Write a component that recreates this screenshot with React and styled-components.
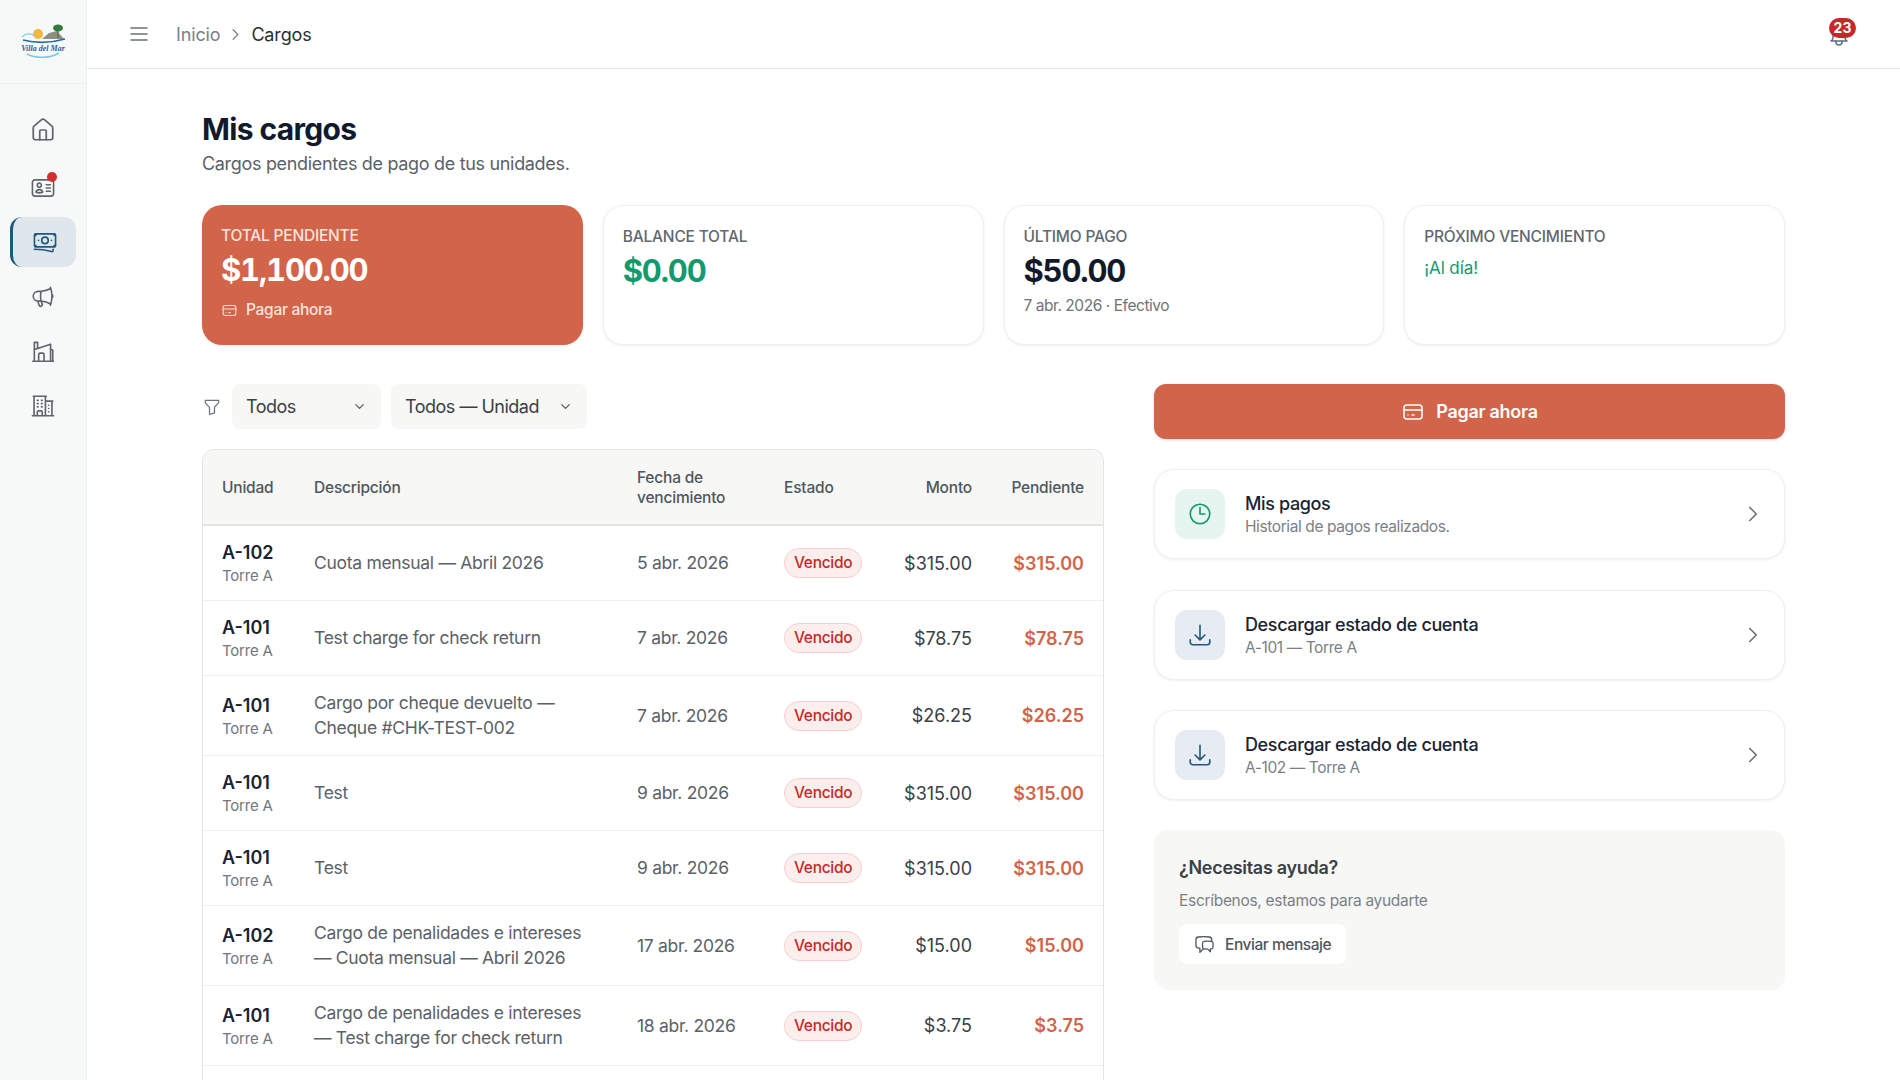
import React from "react";
import styled, { createGlobalStyle } from "styled-components";
import { TbMenu2, TbChevronRight, TbChevronDown, TbFilter, TbCreditCard, TbBell } from "react-icons/tb";
import {
  HiOutlineIdentification,
  HiOutlineBanknotes,
  HiOutlineMegaphone,
  HiOutlineBuildingOffice2,
  HiOutlineClock,
  HiOutlineArrowDownTray,
  HiOutlineChatBubbleLeftRight,
} from "react-icons/hi2";
import { House } from "lucide-react";

const GlobalStyle = createGlobalStyle`
  * { box-sizing: border-box; }
  html, body { margin: 0; height: 100%; }
  body {
    overflow: hidden;
    background: #fff;
    color: #111827;
    font-family: "Inter", "Liberation Sans", sans-serif;
  }
`;

const charges = [
  { unit: "A-102", desc: ["Cuota mensual — Abril 2026"], date: "5 abr. 2026", amount: "$315.00", h: 75 },
  { unit: "A-101", desc: ["Test charge for check return"], date: "7 abr. 2026", amount: "$78.75", h: 75 },
  { unit: "A-101", desc: ["Cargo por cheque devuelto —", "Cheque #CHK-TEST-002"], date: "7 abr. 2026", amount: "$26.25", h: 80 },
  { unit: "A-101", desc: ["Test"], date: "9 abr. 2026", amount: "$315.00", h: 75 },
  { unit: "A-101", desc: ["Test"], date: "9 abr. 2026", amount: "$315.00", h: 75 },
  { unit: "A-102", desc: ["Cargo de penalidades e intereses", "— Cuota mensual — Abril 2026"], date: "17 abr. 2026", amount: "$15.00", h: 80 },
  { unit: "A-101", desc: ["Cargo de penalidades e intereses", "— Test charge for check return"], date: "18 abr. 2026", amount: "$3.75", h: 80 },
];

const Shell = styled.div`
  display: flex;
  height: 100vh;
  overflow: hidden;
`;

const Sidebar = styled.aside`
  width: 87px;
  flex: none;
  background: #f7f8f8;
  border-right: 1px solid #eeefef;
`;

const LogoBox = styled.div`
  height: 84px;
  display: flex;
  align-items: center;
  justify-content: center;
  border-bottom: 1px solid #eeefef;
`;

const NavList = styled.nav`
  display: flex;
  flex-direction: column;
  align-items: center;
  padding-top: 21px;
  gap: 4.5px;
`;

const NavItem = styled.div`
  position: relative;
  width: 66px;
  height: 50px;
  margin-top: ${(p) => p.$top || 0}px;
  display: flex;
  align-items: center;
  justify-content: center;
  border-radius: 12px;
  color: ${(p) => (p.$active ? "#1e5a7e" : "#5f656c")};
  background: ${(p) => (p.$active ? "#dfe7ed" : "transparent")};
  border-left: ${(p) => (p.$active ? "3px solid #1e5a7e" : "0")};
  svg { width: 26px; height: 26px; }
`;

const NavDot = styled.span`
  position: absolute;
  top: 9px;
  right: 19px;
  width: 10px;
  height: 10px;
  border-radius: 50%;
  background: #d32f2f;
`;

const Main = styled.div`
  flex: 1;
  min-width: 0;
`;

const Topbar = styled.header`
  height: 69px;
  display: flex;
  align-items: center;
  padding: 0 49px 0 40px;
  border-bottom: 1px solid #e9eaeb;
`;

const MenuButton = styled.span`
  display: flex;
  color: #6b7177;
  font-size: 24px;
  margin-right: 25px;
`;

const Crumbs = styled.div`
  display: flex;
  align-items: center;
  gap: 6px;
  font-size: 18px;
  letter-spacing: -0.15px;
  color: #7b8087;
  svg { font-size: 19px; }
`;

const CrumbCurrent = styled.span`
  color: #2a2f36;
`;

const BellWrap = styled.div`
  position: relative;
  margin: 3px 0 0 auto;
  display: flex;
  color: #5c6f85;
  font-size: 24px;
`;

const BellBadge = styled.span`
  position: absolute;
  top: -6px;
  right: -5px;
  min-width: 27px;
  height: 20px;
  border-radius: 10px;
  background: #c62828;
  color: #fff;
  font-size: 14px;
  font-weight: 700;
  display: flex;
  align-items: center;
  justify-content: center;
`;

const Content = styled.main`
  padding: 40px 115px 0;
`;

const Title = styled.h1`
  margin: 0;
  font-size: 30px;
  line-height: 40px;
  font-weight: 700;
  letter-spacing: -0.65px;
  color: #111a2b;
`;

const Subtitle = styled.p`
  margin: 3px 0 0;
  font-size: 18px;
  line-height: 24px;
  letter-spacing: -0.32px;
  color: #5b6168;
`;

const Stats = styled.section`
  display: grid;
  grid-template-columns: repeat(4, 1fr);
  gap: 20px;
  margin-top: 29px;
`;

const StatCard = styled.div`
  height: 140px;
  padding: 21px 19px;
  border-radius: 20px;
  background: ${(p) => (p.$accent ? "#d2644a" : "#fff")};
  border: ${(p) => (p.$accent ? "0" : "1px solid #eeefef")};
  box-shadow: 0 1px 3px rgba(17, 24, 39, 0.07);
`;

const StatLabel = styled.div`
  font-size: 15.5px;
  line-height: 20px;
  font-weight: 500;
  letter-spacing: -0.2px;
  color: ${(p) => (p.$accent ? "#fbe3dc" : "#62686f")};
`;

const StatValue = styled.div`
  margin-top: 4px;
  font-size: 31px;
  line-height: 40px;
  font-weight: 700;
  font-variant-numeric: tabular-nums;
  letter-spacing: -1.2px;
  color: ${(p) => p.$color || "#111a2b"};
`;

const StatGood = styled.div`
  margin-top: 9px;
  font-size: 17px;
  line-height: 24px;
  letter-spacing: -0.1px;
  color: #129a6d;
`;

const StatNote = styled.div`
  margin-top: 5px;
  font-size: 15.5px;
  line-height: 20px;
  letter-spacing: -0.45px;
  color: #6e7379;
`;

const StatAction = styled.div`
  margin-top: 10px;
  display: flex;
  align-items: center;
  gap: 8px;
  font-size: 15.5px;
  line-height: 20px;
  font-weight: 500;
  letter-spacing: -0.3px;
  color: #fbe3dc;
  svg { font-size: 17px; }
`;

const Columns = styled.div`
  display: grid;
  grid-template-columns: 902px 631px;
  gap: 50px;
  margin-top: 39px;
  align-items: start;
`;

const Filters = styled.div`
  display: flex;
  align-items: center;
  height: 45px;
  gap: 10px;
`;

const FilterIcon = styled.span`
  display: flex;
  width: 20px;
  color: #6f757b;
  font-size: 20px;
`;

const Select = styled.div`
  width: ${(p) => p.$w}px;
  height: 45px;
  padding: 0 14px;
  display: flex;
  align-items: center;
  justify-content: space-between;
  border-radius: 8px;
  background: #f7f7f6;
  font-size: 18px;
  letter-spacing: -0.5px;
  color: #3b4047;
  svg { font-size: 15px; color: #555b62; }
`;

const TableBox = styled.div`
  margin-top: 20px;
  border: 1px solid #e3e5e6;
  border-bottom: 0;
  border-radius: 12px 12px 0 0;
  overflow: hidden;
`;

const Table = styled.table`
  width: 100%;
  table-layout: fixed;
  border-collapse: collapse;
`;

const Th = styled.th`
  height: 75px;
  padding: 1px 19px 0;
  background: #f7f7f6;
  border-bottom: 2px solid #e3e5e6;
  font-size: 15.5px;
  line-height: 20px;
  font-weight: 500;
  letter-spacing: -0.2px;
  color: #50565d;
  text-align: ${(p) => (p.$right ? "right" : "left")};
`;

const Row = styled.tr`
  height: ${(p) => p.$h}px;
`;

const Td = styled.td`
  padding: 0 19px;
  border-bottom: 1px solid #eeefef;
  font-size: 17.5px;
  line-height: 25px;
  letter-spacing: -0.3px;
  white-space: nowrap;
  color: #5b6168;
`;

const NudgedTd = styled(Td)`
  padding-top: 1px;
`;

const AmountTd = styled(NudgedTd)`
  font-size: 18px;
  letter-spacing: 0;
  text-align: right;
  font-weight: ${(p) => (p.$strong ? 600 : 400)};
  color: ${(p) => (p.$strong ? "#d2644a" : "#3b4047")};
`;

const UnitName = styled.div`
  font-size: 18px;
  line-height: 25px;
  letter-spacing: 0;
  font-weight: 600;
  color: #1b2330;
`;

const UnitTower = styled.div`
  font-size: 15px;
  line-height: 21px;
  letter-spacing: -0.2px;
  color: #72777d;
`;

const Badge = styled.span`
  display: inline-block;
  height: 30px;
  padding: 0 9px;
  border-radius: 15px;
  border: 1px solid #f6cdd0;
  background: #fdeeee;
  color: #c62828;
  font-size: 15.5px;
  line-height: 28px;
  letter-spacing: -0.3px;
  font-weight: 500;
`;

const Side = styled.aside`
  display: flex;
  flex-direction: column;
  gap: 30.3px;
`;

const PayButton = styled.div`
  height: 55px;
  display: flex;
  align-items: center;
  justify-content: center;
  gap: 11px;
  border-radius: 12px;
  background: #d2644a;
  color: #fff;
  font-size: 18px;
  font-weight: 600;
  letter-spacing: -0.3px;
  box-shadow: 0 1px 3px rgba(17, 24, 39, 0.15);
  svg { font-size: 24px; }
`;

const LinkCard = styled.div`
  height: 90px;
  padding: 0 20px;
  display: flex;
  align-items: center;
  gap: 20px;
  border: 1px solid #eeefef;
  border-radius: 20px;
  background: #fff;
  box-shadow: 0 1px 3px rgba(17, 24, 39, 0.07);
`;

const LinkIcon = styled.div`
  width: 50px;
  height: 50px;
  flex: none;
  display: flex;
  align-items: center;
  justify-content: center;
  border-radius: 12px;
  background: ${(p) => (p.$green ? "#e6f5f0" : "#e6ecf1")};
  color: ${(p) => (p.$green ? "#129a6d" : "#1e5a7e")};
  font-size: 26px;
`;

const LinkText = styled.div`
  flex: 1;
  min-width: 0;
  padding-top: 2px;
`;

const LinkTitle = styled.div`
  font-size: 18px;
  line-height: 24px;
  font-weight: 500;
  letter-spacing: -0.37px;
  color: #1b2330;
`;

const LinkSub = styled.div`
  font-size: 15.5px;
  line-height: 22px;
  letter-spacing: -0.4px;
  color: #7b8087;
`;

const LinkArrow = styled.span`
  display: flex;
  color: #6b7177;
  font-size: 26px;
  margin-right: -2px;
`;

const HelpCard = styled.div`
  height: 160px;
  padding: 26px 25px;
  border-radius: 14px;
  background: #f7f7f6;
`;

const HelpTitle = styled.div`
  font-size: 18px;
  line-height: 24px;
  font-weight: 600;
  letter-spacing: -0.3px;
  color: #3b4047;
`;

const HelpText = styled.div`
  margin-top: 11px;
  font-size: 15.5px;
  line-height: 20px;
  letter-spacing: -0.3px;
  color: #7b8087;
`;

const HelpButton = styled.div`
  display: inline-flex;
  align-items: center;
  gap: 10px;
  height: 40px;
  margin-top: 13px;
  padding: 0 15px;
  border-radius: 8px;
  background: #fff;
  font-size: 15.5px;
  font-weight: 500;
  letter-spacing: -0.45px;
  color: #50565d;
  svg { font-size: 21px; }
`;

const Logo = () => (
  <svg width="50" height="38" viewBox="0 0 50 38" aria-hidden="true">
    <circle cx="20" cy="11" r="5" fill="#f4b63f" />
    <path d="M24 16l7-6 8-2 7 8z" fill="#8d8f82" />
    <path d="M40 15V7" stroke="#6b5a3a" strokeWidth="1.2" />
    <ellipse cx="40" cy="5" rx="5" ry="3.5" fill="#2f7d3c" />
    <path d="M4 14c4-4 9-4 13-1" stroke="#8fd0ea" strokeWidth="1.4" fill="none" />
    <path d="M5 17c12 3 28 3 42-1" stroke="#1f6fa8" strokeWidth="1.8" fill="none" />
    <text x="25" y="28" textAnchor="middle" fontFamily="Liberation Serif" fontStyle="italic" fontWeight="700" fontSize="8" fill="#2b5ea8">
      Villa del Mar
    </text>
    <path d="M9 31c10 5 24 4 32-1" stroke="#7cc7e6" strokeWidth="1.6" fill="none" />
  </svg>
);

const FactoryIcon = () => (
  <svg viewBox="0 0 24 24" fill="none" stroke="currentColor" strokeWidth="1.5" strokeLinecap="round" strokeLinejoin="round" aria-hidden="true">
    <path d="M2.5 21.5h19" />
    <path d="M4 21.5V4h3v5.8M4 10.5l3-.8 12-4v15.8" />
    <path d="M8 21.5v-6a1.5 1.5 0 0 1 1.5-1.5h2a1.5 1.5 0 0 1 1.5 1.5v6" />
    <path d="M19 10.5l2 .5v10.5" />
  </svg>
);

const ChevronLink = () => <LinkArrow><TbChevronRight strokeWidth={1.5} /></LinkArrow>;

const App = () => {
  return (
    <>
      <GlobalStyle />
      <Shell>
        <Sidebar>
          <LogoBox>
            <Logo />
          </LogoBox>
          <NavList>
            <NavItem><House strokeWidth={1.6} /></NavItem>
            <NavItem $top={3}><HiOutlineIdentification /><NavDot /></NavItem>
            <NavItem $active><HiOutlineBanknotes /></NavItem>
            <NavItem><HiOutlineMegaphone /></NavItem>
            <NavItem><FactoryIcon /></NavItem>
            <NavItem><HiOutlineBuildingOffice2 /></NavItem>
          </NavList>
        </Sidebar>
        <Main>
          <Topbar>
            <MenuButton><TbMenu2 strokeWidth={1.5} /></MenuButton>
            <Crumbs>
              <span>Inicio</span>
              <TbChevronRight strokeWidth={1.5} />
              <CrumbCurrent>Cargos</CrumbCurrent>
            </Crumbs>
            <BellWrap>
              <TbBell strokeWidth={1.5} />
              <BellBadge>23</BellBadge>
            </BellWrap>
          </Topbar>
          <Content>
            <Title>Mis cargos</Title>
            <Subtitle>Cargos pendientes de pago de tus unidades.</Subtitle>
            <Stats>
              <StatCard $accent>
                <StatLabel $accent>TOTAL PENDIENTE</StatLabel>
                <StatValue $color="#fff">$1,100.00</StatValue>
                <StatAction><TbCreditCard strokeWidth={1.5} />Pagar ahora</StatAction>
              </StatCard>
              <StatCard>
                <StatLabel>BALANCE TOTAL</StatLabel>
                <StatValue $color="#129a6d">$0.00</StatValue>
              </StatCard>
              <StatCard>
                <StatLabel>ÚLTIMO PAGO</StatLabel>
                <StatValue>$50.00</StatValue>
                <StatNote>7 abr. 2026 · Efectivo</StatNote>
              </StatCard>
              <StatCard>
                <StatLabel>PRÓXIMO VENCIMIENTO</StatLabel>
                <StatGood>¡Al día!</StatGood>
              </StatCard>
            </Stats>
            <Columns>
              <div>
                <Filters>
                  <FilterIcon><TbFilter strokeWidth={1.5} /></FilterIcon>
                  <Select $w={149}>Todos<TbChevronDown /></Select>
                  <Select $w={196}>Todos — Unidad<TbChevronDown /></Select>
                </Filters>
                <TableBox>
                  <Table>
                    <colgroup>
                      <col width="92" />
                      <col width="323" />
                      <col width="147" />
                      <col width="118" />
                      <col width="108" />
                      <col width="112" />
                    </colgroup>
                    <thead>
                      <tr>
                        <Th>Unidad</Th>
                        <Th>Descripción</Th>
                        <Th>Fecha de vencimiento</Th>
                        <Th>Estado</Th>
                        <Th $right>Monto</Th>
                        <Th $right>Pendiente</Th>
                      </tr>
                    </thead>
                    <tbody>
                      {charges.map((c, i) => (
                        <Row key={i} $h={c.h}>
                          <NudgedTd>
                            <UnitName>{c.unit}</UnitName>
                            <UnitTower>Torre A</UnitTower>
                          </NudgedTd>
                          <Td>{c.desc.map((line) => <div key={line}>{line}</div>)}</Td>
                          <Td>{c.date}</Td>
                          <NudgedTd><Badge>Vencido</Badge></NudgedTd>
                          <AmountTd>{c.amount}</AmountTd>
                          <AmountTd $strong>{c.amount}</AmountTd>
                        </Row>
                      ))}
                      <Row $h={40}><Td colSpan={6} /></Row>
                    </tbody>
                  </Table>
                </TableBox>
              </div>
              <Side>
                <PayButton><TbCreditCard strokeWidth={1.5} />Pagar ahora</PayButton>
                <LinkCard>
                  <LinkIcon $green><HiOutlineClock /></LinkIcon>
                  <LinkText>
                    <LinkTitle>Mis pagos</LinkTitle>
                    <LinkSub>Historial de pagos realizados.</LinkSub>
                  </LinkText>
                  <ChevronLink />
                </LinkCard>
                <LinkCard>
                  <LinkIcon><HiOutlineArrowDownTray /></LinkIcon>
                  <LinkText>
                    <LinkTitle>Descargar estado de cuenta</LinkTitle>
                    <LinkSub>A-101 — Torre A</LinkSub>
                  </LinkText>
                  <ChevronLink />
                </LinkCard>
                <LinkCard>
                  <LinkIcon><HiOutlineArrowDownTray /></LinkIcon>
                  <LinkText>
                    <LinkTitle>Descargar estado de cuenta</LinkTitle>
                    <LinkSub>A-102 — Torre A</LinkSub>
                  </LinkText>
                  <ChevronLink />
                </LinkCard>
                <HelpCard>
                  <HelpTitle>¿Necesitas ayuda?</HelpTitle>
                  <HelpText>Escríbenos, estamos para ayudarte</HelpText>
                  <HelpButton><HiOutlineChatBubbleLeftRight />Enviar mensaje</HelpButton>
                </HelpCard>
              </Side>
            </Columns>
          </Content>
        </Main>
      </Shell>
    </>
  );
};

export default App;
